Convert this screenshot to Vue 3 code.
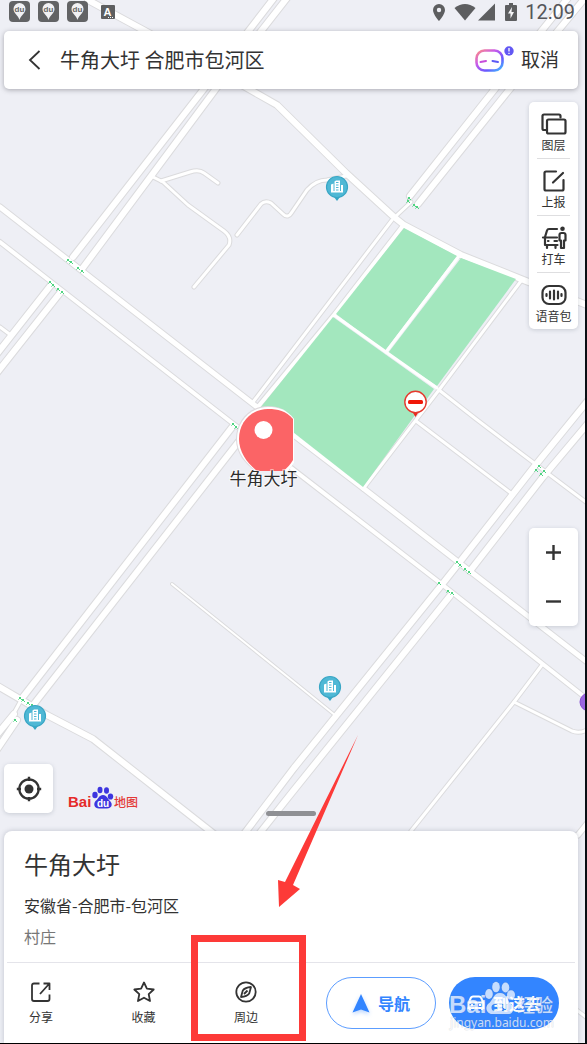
<script setup>
import { ref } from 'vue'

const query = ref('牛角大圩 合肥市包河区')

const roads = [
  { w: 3, d: 'M153 177 L163 182 L188 205 L224 231 Q232 237 229 245 L194 287' },
  { w: 3, d: 'M161 181 L190 172 Q199 169 204 173 L218 183' },
  { w: 3, d: 'M237 235 L261 204 Q265 200 271 203 L283 214 Q288 219 292 212 L307 190 Q316 180 327 180 L346 176' },
  { w: 3, d: 'M0 327 L12 336' },
  { w: 3, d: 'M392 220 L253 402' },
  { w: 4, d: 'M402 227 L334 315 L257 408' },
  { w: 3, d: 'M521 281 L439 390 L363 489' },
  { w: 3, d: 'M439 390 L476 419 L534 463 L587 503' },
  { w: 3, d: 'M416 421 L512 494' },
  { w: 3, d: 'M396 216 L411 202' },
  { w: 2, d: 'M172 584 L294 682 L336 716' },
  { w: 3, d: 'M542 665 L514 702 L411 831' },
  { w: 3, d: 'M514 702 L572 731 Q579 734 587 730' },
  { w: 3, d: 'M20 702 L14 713' },
  { w: 4, d: 'M0 242 L50 281 L231 422 L290 467 L439 582 L582 695 L600 709' },
  { w: 5, d: 'M0 207 L68 260 L257 407 L363 488 L457 561 L600 672' },
  { w: 6, d: 'M88 0 L147 32 L247 88 L277 105 L346 173 L394 217 L404 225 L461 255 L521 279 L587 305' },
  { w: 6, d: 'M-4 685 L20 699 L47 715 L93 739 L214 834' },
  { w: 6, d: 'M274 -2 L203 90 L73 257' },
  { w: 6, d: 'M287 -2 L215 90 L82 269' },
  { w: 6, d: 'M568 -2 L494 90 L410 196' },
  { w: 6, d: 'M585 -2 L509 90 L418 204' },
  { w: 6, d: 'M51 285 L-4 355' },
  { w: 6, d: 'M60 293 L-4 374' },
  { w: 6, d: 'M233 426 L23 697' },
  { w: 6, d: 'M243 436 L34 704' },
  { w: 6, d: 'M14 714 L-4 736' },
  { w: 6, d: 'M17 720 L-4 751' },
  { w: 6, d: 'M590 398 L534 467 L459 563 L440 587 L294 768 L244 834' },
  { w: 6, d: 'M590 421 L543 477 L470 571' },
  { w: 6, d: 'M450 596 L294 790 L259 834' },
  { w: 5, d: 'M590 820 L578 835' },
  { w: 3, d: 'M574 1008 L590 1020' }
]

const parks = [
  '404,228 457,256 385,351 336,314',
  '461,258 516,279 437,386 388,353',
  '333,317 434,389 363,487 261,407'
]
const parkPaths = [
  'M334 315 L386 352 L437 388',
  'M459 256 L386 352'
]

const lights = [
  [68, 260], [71, 262], [78, 268], [82, 271], [50, 282], [53, 285], [58, 289], [62, 292],
  [233, 424], [236, 427], [20, 698], [23, 700], [28, 703], [32, 705], [15, 720],
  [457, 562], [460, 565], [465, 569], [469, 572], [439, 583], [448, 591], [452, 593],
  [539, 466], [536, 470], [544, 471], [541, 474], [409, 198], [408, 201], [414, 205], [417, 207]
]

const buildings = [[337, 187], [330, 687], [35, 716]]
</script>

<template>
  <main class="screen">
    <svg class="map" viewBox="0 0 585 1043" preserveAspectRatio="xMinYMin slice" role="img" aria-label="地图">
      <path v-for="(r, i) in roads" :key="'c' + i" :d="r.d" :stroke-width="r.w + 2" class="casing" />
      <path v-for="(r, i) in roads" :key="'f' + i" :d="r.d" :stroke-width="r.w" class="fill" />
      <polygon v-for="p in parks" :key="p" :points="p" fill="#a3e7be" />
      <path v-for="p in parkPaths" :key="p" :d="p" stroke-width="3" class="fill" />
      <g v-for="(l, i) in lights" :key="'l' + i" :transform="`translate(${l[0]} ${l[1]})`" fill="#50d582">
        <rect x="-1" y="-1" width="2" height="2" />
        <rect x="1" y="1" width="1" height="1" />
        <rect x="-2" y="1" width="1" height="1" opacity=".6" />
      </g>

      <g v-for="(b, i) in buildings" :key="'b' + i" :transform="`translate(${b[0]} ${b[1]})`">
        <path d="M-3 10 L0 14 L3 10Z" fill="#35a5c4" />
        <circle r="10.5" fill="#4fb8d5" stroke="#39a6c5" stroke-width="1.2" />
        <path d="M-6 -2.500 L-3.500 -3.500 V4 H-2.500 V-5.500 L-1 -6.500 H3 V4 H4 V-2 H6 V5.500 H-6Z" fill="#fff" />
        <path d="M-1 -4.500 H1.500 M-1 -2 H1.500 M-1 .5 H1.500 M-1 3 H1.500" stroke="#4fb8d5" />
      </g>

      <g transform="translate(415.5 402)">
        <path d="M-3 10 L0 15 L3 10Z" fill="#e8291c" />
        <circle r="10.7" fill="#fff" stroke="#e53a2e" stroke-width="1.4" />
        <rect x="-7.5" y="-2" width="15" height="4" rx="1.5" fill="#f01808" />
      </g>

      <circle cx="589" cy="702" r="9" fill="#9a66e0" stroke="#8850d0" />

      <path d="M294 419 C286 409 278 406 268 406 C250 406 236 420 236 439 C236 454 245 463 255 471 L288 471 L294 463Z" fill="#ded9dd" />
      <path d="M294 419 C286 409 278 407 268 407 C251 407 237 421 237 439 C237 453 246 463 256 471 H288 L294 463Z" fill="#fff" />
      <path d="M293 419 C286 411 278 409 268 409 C251 409 239 422 239 439 C239 452 247 463 257 471 H283 Q289 467 293 460Z" fill="#fb6466" />
      <circle cx="263.5" cy="430" r="9" fill="#fff" />
      <text x="263.5" y="485" text-anchor="middle" class="place">牛角大圩</text>
    </svg>

    <header class="status">
      <svg v-for="n in 3" :key="n" class="app-icon" width="21" height="21" viewBox="0 0 21 21">
        <rect width="21" height="21" rx="4" fill="#626365" />
        <path d="M10.5 19 C9.5 14.5 4.500 12.5 4.500 8 A6 6 0 0 1 16.5 8 C16.5 12.5 11.5 14.5 10.5 19Z" fill="#f1f1f4" />
        <text x="10.5" y="11" text-anchor="middle" class="du-small">du</text>
      </svg>
      <svg class="a-icon" width="14" height="14" viewBox="0 0 14 14">
        <rect width="14" height="14" rx="1" fill="#5d5e60" />
        <text x="6.5" y="11" text-anchor="middle" class="a-letter">A</text>
        <path d="M7 12.5 H12" stroke="#fff" stroke-dasharray="1 1" />
      </svg>
      <span class="spacer"></span>
      <svg width="80" height="20" viewBox="0 0 80 20" fill="#5d5e60">
        <path d="M7 2 A6 6 0 0 0 1 8 C1 12.5 7 19 7 19 S13 12.5 13 8 A6 6 0 0 0 7 2Z M7 5.800 A2.200 2.200 0 1 1 7 10.2 A2.200 2.200 0 0 1 7 5.800Z" fill-rule="evenodd" />
        <path d="M22.5 6 Q33 -2 43.5 6 L33 18.5Z" />
        <path d="M63 1.5 V18.5 H46Z" />
      </svg>
      <svg class="battery" width="12" height="18" viewBox="0 0 12 18">
        <path d="M4 0 H8 V2 H11 Q12 2 12 3 V17 Q12 18 11 18 H1 Q0 18 0 17 V3 Q0 2 1 2 H4Z" fill="#5d5e60" />
        <path d="M7 4 L3 10.5 H5.500 V15.5 L9 9 H6.500Z" fill="#f5f5f7" />
      </svg>
      <time class="clock">12:09</time>
    </header>

    <form class="search" @submit.prevent>
      <button type="button" class="back" aria-label="返回">
        <svg width="13" height="20" viewBox="0 0 13 20"><path d="M11.5 1 L2 10 L11.5 19" fill="none" stroke="#333" stroke-width="1.8" /></svg>
      </button>
      <input v-model="query" class="query" type="text" aria-label="搜索地点">
      <button type="button" class="robot" aria-label="语音助手">
        <svg width="40" height="28" viewBox="0 0 40 28">
          <defs>
            <linearGradient id="robot-ring" x1="0" y1="0" x2="1" y2="1">
              <stop offset="0" stop-color="#ff8d83" />
              <stop offset=".35" stop-color="#c95bea" />
              <stop offset=".7" stop-color="#6759ff" />
              <stop offset="1" stop-color="#3fc4ff" />
            </linearGradient>
          </defs>
          <rect x="2.5" y="4.5" width="26" height="20" rx="8" fill="#fff" stroke="url(#robot-ring)" stroke-width="2.6" />
          <path d="M6.5 16 L12 15" stroke="#c74ddb" stroke-width="2" stroke-linecap="round" />
          <path d="M18.5 15 L24 16" stroke="#5c5af5" stroke-width="2" stroke-linecap="round" />
          <circle cx="35" cy="5" r="4.7" fill="#6258f3" />
          <path d="M35 2 V5.500 M35 6.700 V8" stroke="#fff" stroke-width="1.3" />
        </svg>
      </button>
      <button type="button" class="cancel">取消</button>
    </form>

    <section class="body">
      <nav class="panel tools" aria-label="地图工具">
        <button type="button">
          <svg width="26" height="24" viewBox="0 0 26 24" class="line">
            <path d="M5 18 H3 Q1.500 18 1.500 16.5 V4 Q1.500 2.500 3 2.500 H18 Q19.5 2.500 19.5 4 V5.500" />
            <rect x="6" y="7.5" width="18.5" height="14" rx="1.5" />
          </svg>
          <span>图层</span>
        </button>
        <button type="button">
          <svg width="26" height="24" viewBox="0 0 26 24" class="line">
            <path d="M15 2.500 H5 Q3.500 2.500 3.500 4 V20 Q3.500 21.5 5 21.5 H21 Q22.5 21.5 22.5 20 V11 M12 13.5 L22 4" />
          </svg>
          <span>上报</span>
        </button>
        <button type="button">
          <svg width="26" height="24" viewBox="0 0 26 24" class="line">
            <path d="M16 3 H8 Q6.500 3 6 4.500 L4 11 M2 11.5 H16 M4 11.5 V19 H16.5 M6 19.5 V22 M14.5 19.5 V22 M7 15 H7.500 M13.5 15 H16" />
            <circle cx="21.5" cy="2.8" r="1.2" fill="#333" />
            <path d="M20.5 7 H22.5 Q24.5 7 24.5 9 V14.5 H23 V22 H20 V14.5 H18.5 V9 Q18.5 7 20.5 7Z" />
          </svg>
          <span>打车</span>
        </button>
        <button type="button">
          <svg width="26" height="24" viewBox="0 0 26 24" class="line">
            <rect x="1.5" y="3" width="23" height="18" rx="6.5" />
            <path d="M5.500 11 V13 M9 8.500 V15.5 M13 7.500 V16.5 M17 8.500 V15.5 M20.5 11 V13" />
          </svg>
          <span>语音包</span>
        </button>
      </nav>

      <div class="panel zoom">
        <button type="button" aria-label="放大"><svg width="17" height="17" viewBox="0 0 17 17"><path d="M1 8.500 H16 M8.500 1 V16" /></svg></button>
        <button type="button" aria-label="缩小"><svg width="17" height="17" viewBox="0 0 17 17"><path d="M1 8.500 H16" /></svg></button>
      </div>

      <div class="corner">
        <button type="button" class="panel locate" aria-label="定位">
          <svg width="26" height="26" viewBox="0 0 26 26">
            <circle cx="13" cy="13" r="9.7" fill="none" stroke="#333" stroke-width="2.2" />
            <circle cx="13" cy="13" r="4.5" fill="#333" />
            <path d="M13 .8 V5 M13 21 V25.2 M.8 13 H5 M21 13 H25.2" stroke="#333" stroke-width="2.4" />
          </svg>
        </button>
        <svg class="logo" width="72" height="28" viewBox="0 0 72 28" role="img" aria-label="百度地图">
          <text x="0" y="22" class="logo-bai">Bai</text>
          <g fill="#3d35df">
            <ellipse cx="27" cy="10" rx="2.7" ry="3.2" />
            <ellipse cx="32" cy="5" rx="2.5" ry="3.3" />
            <ellipse cx="38.5" cy="5.5" rx="2.5" ry="3.2" />
            <ellipse cx="42.5" cy="11.5" rx="2.7" ry="3.1" />
            <path d="M35 10 C31 10 30.5 14 27.5 16 C25 19 26.5 23.5 31 23.5 H39 C43.5 23.5 45 19.5 42.5 16.5 C39.5 14 39 10 35 10Z" />
          </g>
          <text x="35" y="22" text-anchor="middle" class="logo-du">du</text>
          <text x="46" y="22" class="logo-map">地图</text>
        </svg>
      </div>
    </section>

    <section class="sheet">
      <span class="handle"></span>
      <div class="info">
        <h1>牛角大圩</h1>
        <p class="address">安徽省-合肥市-包河区</p>
        <p class="kind">村庄</p>
      </div>
      <div class="actions">
        <div class="links">
          <button type="button">
            <svg width="24" height="24" viewBox="0 0 24 24" class="thin">
              <path d="M10.5 3.500 H5 Q3 3.500 3 5.500 V19 Q3 21 5 21 H18.5 Q20.5 21 20.5 19 V14.5 M14.5 3.500 H20.5 V10 M20 4 L11 14" />
            </svg>
            <span>分享</span>
          </button>
          <button type="button">
            <svg width="24" height="24" viewBox="0 0 24 24" class="thin">
              <path d="M12 2.500 L14.9 8.700 L21.7 9.500 L16.7 14.2 L18 21 L12 17.7 L6 21 L7.300 14.2 L2.300 9.500 L9.100 8.700Z" />
            </svg>
            <span>收藏</span>
          </button>
          <button type="button">
            <svg width="24" height="24" viewBox="0 0 24 24" class="thin">
              <circle cx="12" cy="12" r="9.7" />
              <path d="M17 7 Q11 7.500 8.800 10.5 L7 17 Q13 16.5 15.2 13.5Z M10 14 L13.5 10.5" />
            </svg>
            <span>周边</span>
            <i class="highlight"></i>
          </button>
        </div>
        <button type="button" class="pill outline">
          <svg class="arrow" width="24" height="24" viewBox="0 0 24 24"><path d="M12 3 L20.5 21.5 L12 18.5 L3.500 21.5Z" fill="#3385ff" /></svg>
          导航
        </button>
        <button type="button" class="pill solid">
          <svg width="18" height="16" viewBox="0 0 18 16">
            <path d="M2 7 L4 2.500 Q4.500 1.500 6 1.500 H12 Q13.5 1.500 14 2.500 L16 7 M1.500 7.500 H16.5 V13 H1.500Z M3 13 V15 M15 13 V15 M4 10 H6 M12 10 H14" fill="none" stroke="#fff" stroke-width="2" />
          </svg>
          到这去
          <svg class="watermark" width="114" height="60" viewBox="0 0 114 60" aria-hidden="true">
            <g class="wm">
              <text x="2" y="40" class="wm-bai">Bai</text>
              <ellipse cx="42" cy="21" rx="3.8" ry="5" />
              <ellipse cx="49" cy="14" rx="3.8" ry="5.3" />
              <ellipse cx="58.5" cy="14.5" rx="3.8" ry="5" />
              <ellipse cx="64" cy="22" rx="4" ry="4.8" />
              <path fill-rule="evenodd" d="M53 20 C46 20 46 28 41 31 C37 36 41 42 47 41 H59 C67 42 68 35 64 31 C60 28 60 20 53 20Z M48 31 A3.500 3.500 0 1 0 48 38 A3.500 3.500 0 0 0 48 31Z M55 31 V38 H61 V31 H59 V36 H57 V31Z" />
              <text x="70" y="39" class="wm-cn">经验</text>
              <text x="55" y="54" text-anchor="middle" class="wm-url">jingyan.baidu.com</text>
            </g>
          </svg>
        </button>
      </div>
    </section>

    <svg class="map pointer" viewBox="0 0 585 1043" preserveAspectRatio="xMinYMin slice" aria-hidden="true">
      <path d="M358 735 L293 885 L300 889 L279 907 L278 880 L285 882Z" fill="#fd3a38" />
    </svg>
  </main>
</template>

<style>
html, body { margin: 0; }
</style>

<style scoped>
.screen {
  position: relative;
  display: flex;
  flex-direction: column;
  box-sizing: border-box;
  min-height: 100vh;
  overflow: hidden;
  background: #eeeff5;
  border-right: 2px solid #090f14;
  border-bottom: 1px solid #000;
  color: #333;
  font-family: "Noto Sans CJK SC", sans-serif;
}
.screen > * { position: relative; }
.screen > .map {
  position: absolute;
  top: 0;
  left: 0;
  width: 100%;
  height: 100%;
}
.screen > .pointer { pointer-events: none; }
.casing { fill: none; stroke: #dbdbdd; stroke-linecap: round; stroke-linejoin: round; }
.fill { fill: none; stroke: #fff; stroke-linecap: round; stroke-linejoin: round; }
.place {
  font-size: 17px;
  fill: #2c2c2c;
  stroke: rgba(255, 255, 255, .6);
  stroke-width: 2px;
  paint-order: stroke;
}
button {
  margin: 0;
  padding: 0;
  border: 0;
  background: none;
  color: inherit;
  font-family: inherit;
}
svg { display: block; flex: none; }

.status {
  display: flex;
  align-items: center;
  height: 23px;
  padding: 0 10px 0 9px;
  margin-bottom: 8px;
}
.app-icon { margin-right: 8px; }
.a-icon { margin-left: 5px; }
.du-small { font: bold 8px "Liberation Sans", sans-serif; fill: #666; }
.a-letter { font: bold 11px "Liberation Sans", sans-serif; fill: #fff; }
.spacer { flex: 1; }
.battery { margin-left: -7px; }
.clock {
  margin-left: 8px;
  font: 400 20px/24px Roboto, sans-serif;
  color: #55565a;
}

.search {
  display: flex;
  align-items: center;
  height: 58px;
  margin: 0 7px 0 4px;
  padding: 0 19px 0 24px;
  border-radius: 5px;
  background: #fff;
  box-shadow: 0 1px 5px rgba(60, 60, 70, .4);
}
.query {
  flex: 1;
  min-width: 0;
  margin: 0 12px 0 19px;
  padding: 0;
  border: 0;
  outline: 0;
  background: none;
  color: #333;
  font: 20px/28px "Noto Sans CJK SC", sans-serif;
}
.robot { margin-right: 7px; }
.cancel { padding-bottom: 2px; font-size: 19px; line-height: 28px; color: #333; }

.body {
  display: flex;
  flex: 1;
  flex-direction: column;
  padding: 13px 7px 18px 4px;
}
.panel {
  border-radius: 5px;
  background: #fff;
  box-shadow: 0 1px 4px rgba(70, 80, 100, .22);
}
.tools, .zoom { align-self: flex-end; width: 49px; }
.tools button {
  position: relative;
  display: flex;
  flex-direction: column;
  align-items: center;
  width: 100%;
  height: 57px;
  padding-top: 10px;
  font-size: 12px;
  line-height: 17px;
  white-space: nowrap;
}
.tools button:last-child { height: 56px; }
.tools button:not(:last-child)::after {
  content: "";
  position: absolute;
  right: 8px;
  bottom: 0;
  left: 8px;
  height: 1px;
  background: #dedee0;
}
.line { fill: none; stroke: #333; stroke-width: 2.2; stroke-linecap: round; stroke-linejoin: round; }
.zoom { margin-top: auto; margin-bottom: 138px; }
.zoom button { display: grid; place-items: center; width: 100%; height: 49px; }
.zoom path { stroke: #333; stroke-width: 2.4; }
.corner { display: flex; align-items: flex-end; }
.locate { display: grid; place-items: center; width: 49px; height: 49px; }
.logo { margin-left: 15px; }
.logo-bai { font: bold 15px "Liberation Sans", sans-serif; fill: #e52a2a; }
.logo-du { font: bold 10px "Liberation Sans", sans-serif; fill: #fff; }
.logo-map { font-size: 12px; font-weight: 500; fill: #e33a37; }

.sheet {
  margin: 0 7px 0 4px;
  border-radius: 8px 8px 0 0;
  background: #fff;
  box-shadow: 0 0 5px rgba(80, 85, 110, .3);
}
.handle {
  position: absolute;
  top: -20px;
  left: 50%;
  width: 50px;
  height: 5px;
  margin-left: -25px;
  border-radius: 3px;
  background: #8f9094;
}
.info { margin: 0 3px; padding: 15px 17px 14px; border-bottom: 1px solid #e4e4ea; }
h1, p { margin: 0; font-weight: 400; }
h1 { font-size: 24px; line-height: 36px; }
.address { margin-top: 11px; font-size: 16px; line-height: 24px; }
.kind { margin-top: 7px; font-size: 16px; line-height: 24px; color: #777; }
.actions {
  display: flex;
  align-items: center;
  height: 80px;
  padding: 0 19px 0 16px;
}
.links { display: flex; flex: 1; justify-content: space-between; margin-right: 59px; }
.links button {
  position: relative;
  display: flex;
  flex-direction: column;
  align-items: center;
  gap: 4px;
  width: 42px;
  font-size: 12px;
  line-height: 18px;
}
.thin { fill: none; stroke: #333; stroke-width: 1.8; stroke-linejoin: round; }
.highlight {
  position: absolute;
  top: -45px;
  left: -34px;
  box-sizing: border-box;
  width: 115px;
  height: 106px;
  border: 7px solid #fd3a38;
}
.pill {
  position: relative;
  display: flex;
  align-items: center;
  justify-content: center;
  box-sizing: border-box;
  width: 110px;
  height: 52px;
  border-radius: 26px;
  font-size: 16px;
  font-weight: 700;
  white-space: nowrap;
}
.outline { gap: 5px; margin-right: 13px; padding-right: 3px; border: 1px solid #5c9dff; color: #3385ff; }
.arrow { filter: drop-shadow(0 2px 2px rgba(51, 133, 255, .35)); }
.solid { gap: 8px; background: #3385ff; color: #fff; }
.watermark { position: absolute; top: -4px; left: -2px; overflow: visible; }
.wm { fill: rgba(255, 255, 255, .72); stroke: rgba(120, 130, 150, .2); stroke-width: 1px; paint-order: stroke; }
.wm-bai { font: bold 24px "Liberation Sans", sans-serif; }
.wm-cn { font-size: 18px; font-weight: 500; }
.wm-url { font: 12px "Noto Sans", sans-serif; }
</style>
